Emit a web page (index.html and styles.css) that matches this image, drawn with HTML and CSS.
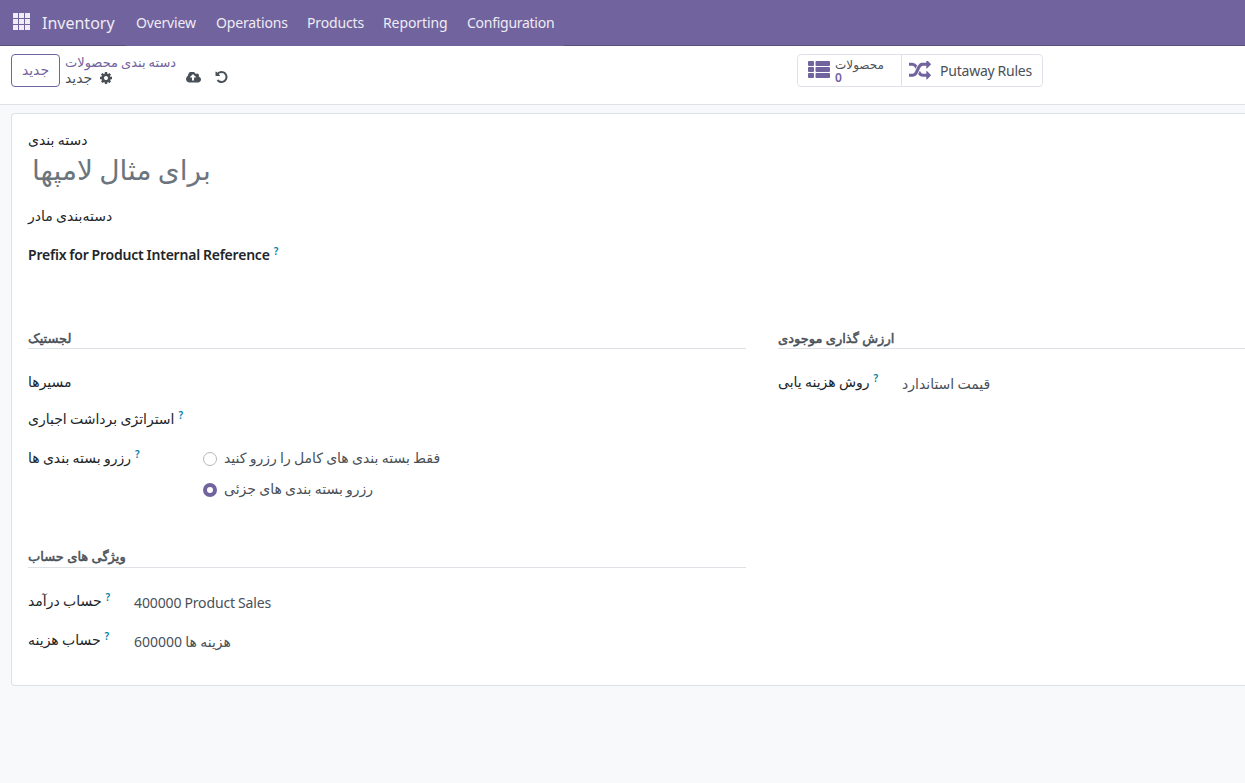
FILE: index.html
```html
<!DOCTYPE html>
<html lang="fa">
<head>
<meta charset="utf-8">
<title>Inventory</title>
<link rel="stylesheet" href="styles.css">
</head>
<body>
<header class="navbar">
  <svg class="apps" viewBox="0 0 17 17"><path d="M0 0h5v5H0zM6 0h5v5H6zM12 0h5v5h-5zM0 6h5v5H0zM6 6h5v5H6zM12 6h5v5h-5zM0 12h5v5H0zM6 12h5v5H6zM12 12h5v5h-5z"/></svg>
  <span class="brand">Inventory</span>
  <nav class="menu">
    <a class="m1">Overview</a><a class="m2">Operations</a><a class="m3">Products</a><a class="m4">Reporting</a><a class="m5">Configuration</a>
  </nav>
</header>
<section class="control">
  <button class="new">جدید</button>
  <div class="crumbs">
    <a class="parent">دسته بندی محصولات</a>
    <div class="current"><span>جدید</span>
      <svg class="cog" viewBox="128 128 1536 1536"><path d="M1152 896q0-106-75-181t-181-75-181 75-75 181 75 181 181 75 181-75 75-181zm512-109v222q0 12-8 23t-20 13l-185 28q-19 54-39 91 35 50 107 138 10 12 10 25t-9 23q-27 37-99 108t-94 71q-12 0-26-9l-138-108q-44 23-91 38-16 136-29 186-7 28-36 28h-222q-14 0-24.500-8.500t-11.500-21.500l-28-184q-49-16-90-37l-141 107q-10 9-25 9-14 0-25-11-126-114-165-168-7-10-7-23 0-12 8-23 15-21 51-66.500t54-70.500q-27-50-41-99l-183-27q-13-2-21-12.500t-8-23.500v-222q0-12 8-23t19-13l186-28q14-46 39-92-40-57-107-138-10-12-10-24 0-10 9-23 26-36 98.500-107.500t94.500-71.500q13 0 26 10l138 107q44-23 91-38 16-136 29-186 7-28 36-28h222q14 0 24.500 8.500t11.500 21.500l28 184q49 16 90 37l142-107q9-9 24-9 13 0 25 10 129 119 165 170 7 8 7 22 0 12-8 23-15 21-51 66.500t-54 70.500q26 50 41 98l183 28q13 2 21 12.500t8 23.500z"/></svg>
    </div>
  </div>
  <div class="actions">
    <svg class="cloud" viewBox="-64 256 1920 1280"><path d="M1216 864q0-14-9-23l-352-352q-9-9-23-9t-23 9l-351 351q-10 12-10 24 0 14 9 23t23 9h224v352q0 13 9.500 22.500t22.500 9.500h192q13 0 22.500-9.500t9.500-22.500v-352h224q13 0 22.500-9.500t9.500-22.500zm640 288q0 159-112.500 271.500t-271.500 112.500h-1088q-185 0-316.500-131.500t-131.500-316.500q0-130 70-240t188-165q-2-30-2-43 0-212 150-362t362-150q156 0 285.500 87t188.500 231q71-62 166-62 106 0 181 75t75 181q0 76-41 138 130 31 213.500 135.500t83.500 238.500z"/></svg>
    <svg class="undo" viewBox="128 128 1536 1536"><path d="M1664 896q0 156-61 298t-164 245-245 164-298 61q-172 0-327-72.500t-264-204.500q-7-10-6.500-22.500t8.500-20.500l137-138q10-9 25-9 16 2 23 12 73 95 179 147t225 52q104 0 198.500-40.500t163.500-109.500 109.500-163.500 40.500-198.500-40.500-198.500-109.500-163.500-163.500-109.500-198.500-40.500q-98 0-188 35.500t-160 101.500l137 138q31 30 14 69-17 40-59 40h-448q-26 0-45-19t-19-45v-448q0-42 40-59 39-17 69 14l130 129q107-101 244.500-156.500t284.500-55.500 298 61 245 164 164 245 61 298z"/></svg>
  </div>
  <div class="stats">
    <div class="stat products">
      <svg class="list" viewBox="0 0 22 17"><g><rect width="6" height="5" rx="1"/><rect x="7.500" width="14.500" height="5" rx="1"/><rect y="6" width="6" height="5" rx="1"/><rect x="7.500" y="6" width="14.500" height="5" rx="1"/><rect y="12" width="6" height="5" rx="1"/><rect x="7.500" y="12" width="14.500" height="5" rx="1"/></g></svg>
      <div class="stat-text"><span>محصولات</span><b>0</b></div>
    </div>
    <div class="stat putaway">
      <svg class="random" viewBox="0 128 1792 1536"><path d="M666 481q-60 92-137 273-22-45-37-72.500t-40.500-63.500-51-56.500-63-35-81.500-14.500h-224q-14 0-23-9t-9-23v-192q0-14 9-23t23-9h224q250 0 410 225zm1126 799q0 14-9 23l-320 320q-9 9-23 9-13 0-22.500-9.500t-9.500-22.500v-192q-32 0-85 .5t-81 1-73-1-71-5-64-10.500-63-18.500-58-28.500-59-40-55-53.500-56-69.500q59-93 136-273 22 45 37 72.500t40.500 63.500 51 56.500 63 35 81.500 14.500h256v-192q0-14 9-23t23-9q12 0 24 10l319 319q9 9 9 23zm0-896q0 14-9 23l-320 320q-9 9-23 9-13 0-22.500-9.500t-9.500-22.500v-192h-256q-48 0-87 15t-69 45-51 61.500-45 77.500q-32 62-78 171-29 66-49.500 111t-54 105-64 100-74 83-90 68.500-106.500 42-128 16.500h-224q-14 0-23-9t-9-23v-192q0-14 9-23t23-9h224q48 0 87-15t69-45 51-61.500 45-77.500q32-62 78-171 29-66 49.500-111t54-105 64-100 74-83 90-68.500 106.500-42 128-16.500h256v-192q0-14 9-23t23-9q12 0 24 10l319 319q9 9 9 23z"/></svg>
      <span class="put-label">Putaway Rules</span>
    </div>
  </div>
</section>
<main class="sheet">
  <div class="label name-label">دسته بندی</div>
  <div class="title">برای مثال لامپها</div>
  <div class="label parent-label">دسته‌بندی مادر</div>
  <div class="label prefix"><span class="prefix-text">Prefix for Product Internal Reference</span><sup>?</sup></div>
  <div class="groups">
    <section class="group">
      <h2>لجستیک</h2>
      <div class="row r-routes"><span class="label">مسیرها</span></div>
      <div class="row r-strategy"><div class="cell"><span class="label">استراتژی برداشت اجباری</span><sup>?</sup></div></div>
      <div class="row r-reserve">
        <div class="cell"><span class="label">رزرو بسته بندی ها</span><sup>?</sup></div>
        <div class="radios">
          <div class="radio"><i></i><span>فقط بسته بندی های کامل را رزرو کنید</span></div>
          <div class="radio"><i class="on"></i><span>رزرو بسته بندی های جزئی</span></div>
        </div>
      </div>
    </section>
    <section class="group">
      <h2>ارزش گذاری موجودی</h2>
      <div class="row"><div class="cell costing"><span class="label">روش هزینه یابی</span><sup>?</sup></div><span class="value">قیمت استاندارد</span></div>
    </section>
    <section class="group">
      <h2 class="accounts-title">ویژگی های حساب</h2>
      <div class="row account"><div class="cell"><span class="label">حساب درآمد</span><sup>?</sup></div><span class="value sales">400000 Product Sales</span></div>
      <div class="row account"><div class="cell"><span class="label">حساب هزینه</span><sup>?</sup></div><span class="value"><span class="num">600000</span> هزینه ها</span></div>
    </section>
  </div>
</main>
</body>
</html>
```
FILE: styles.css
```css
* { box-sizing: border-box; }
body {
  margin: 0;
  height: 783px;
  overflow: hidden;
  background: #f8f9fa;
  color: #495057;
  font: 14px/21px "Noto Sans", "DejaVu Sans", sans-serif;
  word-spacing: -0.4px;
  white-space: nowrap;
}
svg { display: block; flex: none; fill: currentColor; }
.navbar {
  display: flex;
  height: 46px;
  background: linear-gradient(#71639e, #71639e) 126px 0 / 438px 46px no-repeat, linear-gradient(#71639e 45px, #5a4f7f 45px);
  color: #eeecf4;
}
.apps { width: 17px; height: 17px; margin: 13px 12px 0 13px; }
.brand { width: 84px; font-size: 16px; line-height: 46px; }
.menu { display: flex; line-height: 46px; letter-spacing: -0.15px; }
.menu a { padding-left: 10px; }
.m1 { width: 80px; }
.m2 { width: 91px; }
.m3 { width: 76px; }
.m4 { width: 84px; letter-spacing: -0.1px; }
.m5 { width: 107px; letter-spacing: -0.27px; }

.control {
  display: flex;
  height: 59px;
  padding: 8px 0 0 11px;
  background: #fff;
  border-bottom: 1px solid #dee2e6;
}
.new {
  width: 49px;
  height: 33px;
  padding: 0;
  border: 1px solid #71639e;
  border-radius: 4px;
  background: #fff;
  color: #71639e;
  font: 14px/31px "DejaVu Sans", sans-serif;
}
.crumbs { width: 121px; margin-left: 5px; font: 13px/16px "Noto Sans", "DejaVu Sans", sans-serif; }
.parent { display: block; height: 16px; color: #71639e; }
.current { display: flex; gap: 8px; font: 14px/17px "DejaVu Sans", sans-serif; }
.cog { width: 12px; height: 12px; margin-top: 2px; }
.actions { display: flex; gap: 14px; width: 611px; padding-top: 17px; }
.cloud { width: 15px; height: 11px; margin-top: 1px; }
.undo { width: 13px; height: 12px; }
.stats { display: flex; width: 246px; height: 33px; border: 1px solid #dee2e6; border-radius: 4px; }
.stat { display: flex; }
.stat svg { color: #71639e; }
.products { width: 104px; padding-left: 10px; border-right: 1px solid #dee2e6; }
.list { width: 22px; height: 17px; margin-top: 6px; }
.stat-text { display: flex; flex-direction: column; margin-left: 5px; padding-top: 4px; font: 12px/12px "DejaVu Sans", sans-serif; }
.stat-text b { color: #71639e; font: 600 12px/13px "Noto Sans", sans-serif; }
.putaway { padding-left: 7px; line-height: 32px; }
.random { width: 22px; height: 19px; margin: 6px 9px 0 0; }
.put-label { letter-spacing: -0.22px; }

.sheet {
  height: 573px;
  margin: 8px 0 0 11px;
  padding: 15px 0 0 16px;
  background: #fff;
  border: 1px solid #dee2e6;
  border-right: 0;
  border-radius: 4px 0 0 4px;
}
.label { color: #212529; }
.title { height: 41px; padding-left: 4px; color: #6c757d; font-size: 28px; line-height: 38px; word-spacing: -1px; }
.parent-label { margin-top: 14px; }
.prefix { margin-top: 18px; }
.prefix-text { font-weight: 600; letter-spacing: -0.22px; }
sup { margin-left: 4px; color: #0180a5; font-size: 10px; font-weight: 600; line-height: 0; vertical-align: 5px; }
.groups { display: grid; grid-template-columns: 718px 1fr; column-gap: 32px; grid-template-rows: 219px auto; margin-top: 62px; }
h2 {
  margin: 0 0 22px;
  height: 22px;
  border-bottom: 1px solid #dee2e6;
  font: 13px/22px "Noto Sans", "DejaVu Sans", sans-serif;
  word-spacing: 0;
  -webkit-text-stroke: 0.5px currentColor;
}
.accounts-title { line-height: 20px; }
.row { display: flex; height: 21px; }
.r-routes { margin-bottom: 16px; }
.r-strategy { margin-bottom: 18px; }
.r-reserve .cell { width: 175px; }
.radio { display: flex; height: 31px; }
.radio i { width: 14px; height: 14px; margin: 5px 7px 0 0; border: 1px solid #b5b8bb; border-radius: 50%; }
.radio .on { border: 4px solid #71639e; }
.costing { width: 124px; }
.value { padding-top: 2px; }
.sales { letter-spacing: -0.13px; }
.account { margin-bottom: 18px; }
.account .cell { width: 106px; }
```
